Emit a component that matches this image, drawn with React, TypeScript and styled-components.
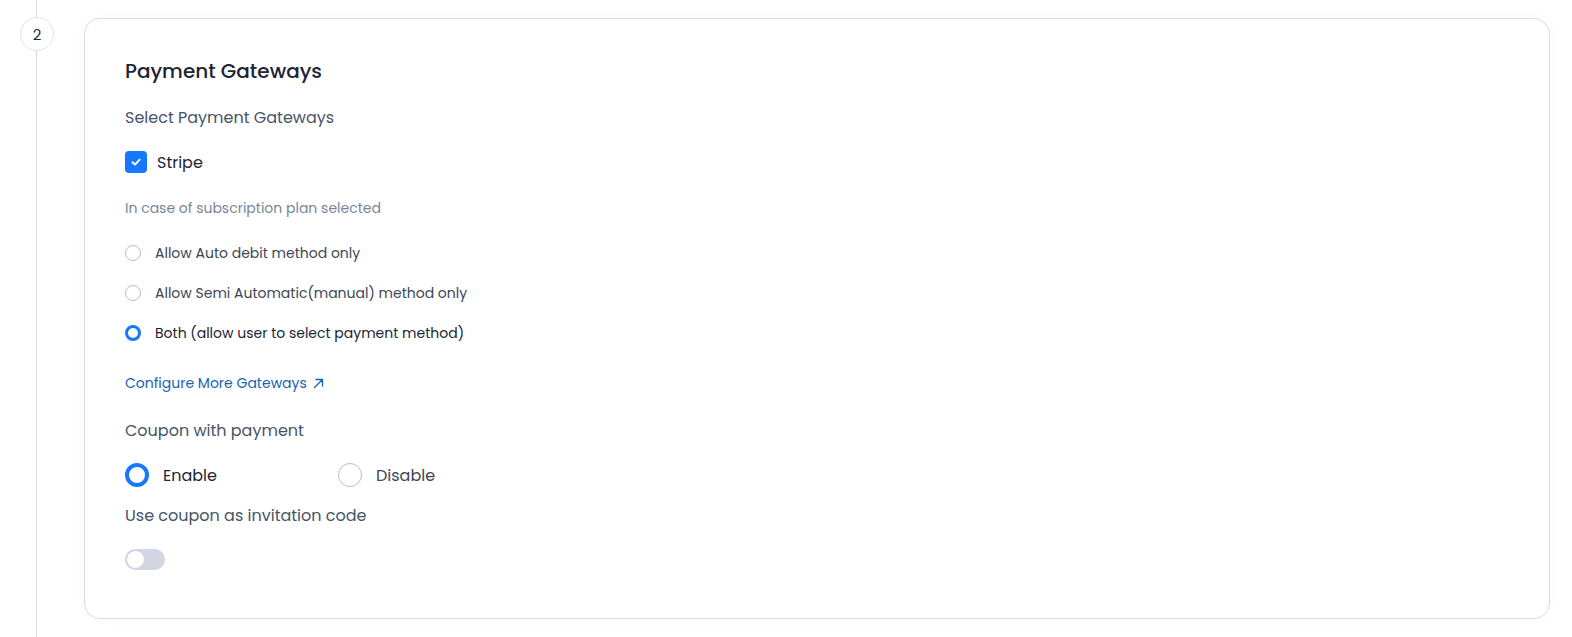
import React from "react";
import styled, { createGlobalStyle, css } from "styled-components";

const Global = createGlobalStyle`
  html, body { margin: 0; padding: 0; background: #ffffff; }
  body { font-family: "Poppins", "Open Sans", "Noto Sans", sans-serif; -webkit-font-smoothing: antialiased; }
  * { box-sizing: border-box; }
`;

const Page = styled.div`
  display: flex;
  align-items: flex-start;
  width: 1572px;
  height: 637px;
  padding-right: 22px;
  overflow: hidden;
`;

const Timeline = styled.div`
  position: relative;
  width: 84px;
  height: 637px;
  flex: none;
  &::before {
    content: "";
    position: absolute;
    left: 36px;
    top: 0;
    bottom: 0;
    width: 1px;
    background: #d9d9d9;
  }
`;

const StepBubble = styled.div`
  position: relative;
  margin: 17px 0 0 20px;
  width: 34px;
  height: 34px;
  border-radius: 50%;
  border: 1px solid #e3e3e3;
  background: #ffffff;
  display: flex;
  align-items: center;
  justify-content: center;
  font-size: 15px;
  color: #1d2939;
`;

const Card = styled.section`
  flex: 1;
  margin-top: 18px;
  height: 601px;
  border: 1px solid #dcdcdc;
  border-radius: 16px;
  background: #ffffff;
  box-shadow: 0 0 14px rgba(0, 0, 0, 0.025);
  padding: 39px 40px 0 40px;
  display: flex;
  flex-direction: column;
  align-items: flex-start;
`;

const Title = styled.h2`
  margin: 0;
  font-size: 20px;
  line-height: 27px;
  font-weight: 500;
  color: #1d2433;
`;

const Label = styled.div<{ $mt: number }>`
  margin-top: ${(p) => p.$mt}px;
  font-size: 16px;
  line-height: 22px;
  color: #475467;
`;

const Hint = styled.div<{ $mt: number }>`
  margin-top: ${(p) => p.$mt}px;
  font-size: 14px;
  line-height: 20px;
  color: #7b8598;
`;

const CheckRow = styled.label<{ $mt: number }>`
  margin-top: ${(p) => p.$mt}px;
  display: flex;
  align-items: center;
  gap: 10px;
  height: 22px;
  font-size: 16px;
  color: #1d2433;
`;

const CheckBox = styled.span`
  width: 22px;
  height: 22px;
  border-radius: 4px;
  background: #1677ff;
  display: flex;
  align-items: center;
  justify-content: center;
`;

const RadioRow = styled.label<{ $mt: number; $size: "sm" | "lg" }>`
  margin-top: ${(p) => p.$mt}px;
  display: flex;
  align-items: center;
  ${(p) =>
    p.$size === "sm"
      ? css`
          gap: 14px;
          height: 20px;
          font-size: 14px;
        `
      : css`
          gap: 14px;
          height: 24px;
          font-size: 16px;
        `}
`;

const RadioDot = styled.span<{ $checked: boolean; $size: "sm" | "lg" }>`
  flex: none;
  border-radius: 50%;
  background: #ffffff;
  ${(p) => {
    const s = p.$size === "sm" ? 16 : 24;
    const bw = p.$checked ? (p.$size === "sm" ? 3 : 4) : 1;
    return css`
      width: ${s}px;
      height: ${s}px;
      border: ${bw}px solid ${p.$checked ? "#1677ff" : "#b8bcc4"};
    `;
  }}
`;

const RadioText = styled.span<{ $checked: boolean }>`
  color: ${(p) => (p.$checked ? "#1d2433" : "#3d4656")};
`;

const OptionGroup = styled.div`
  margin-top: 21px;
  display: flex;
`;

const Option = styled.div`
  width: 213px;
`;

const LinkText = styled.a`
  margin-top: 30px;
  display: flex;
  align-items: center;
  gap: 6px;
  font-size: 14px;
  line-height: 20px;
  color: #1662b5;
  text-decoration: none;
`;

const Toggle = styled.span`
  margin-top: 22px;
  width: 40px;
  height: 21px;
  border-radius: 11px;
  background: #d3d6e2;
  display: flex;
  align-items: center;
  padding-left: 1px;
`;

const Knob = styled.span`
  width: 19px;
  height: 19px;
  border-radius: 50%;
  background: #ffffff;
  border: 1px solid #cfd3dd;
`;

const radios = [
  { label: "Allow Auto debit method only", checked: false },
  { label: "Allow Semi Automatic(manual) method only", checked: false },
  { label: "Both (allow user to select payment method)", checked: true },
];

export default function App() {
  return (
    <>
      <Global />
      <Page>
        <Timeline>
          <StepBubble>2</StepBubble>
        </Timeline>
        <Card>
          <Title>Payment Gateways</Title>
          <Label $mt={22}>Select Payment Gateways</Label>
          <CheckRow $mt={22}>
            <CheckBox>
              <svg width="12" height="12" viewBox="0 0 12 12" fill="none">
                <path d="M2.5 6.2 L5 8.6 L9.6 3.6" stroke="#fff" strokeWidth="1.9" strokeLinecap="round" strokeLinejoin="round" />
              </svg>
            </CheckBox>
            Stripe
          </CheckRow>
          <Hint $mt={25}>In case of subscription plan selected</Hint>
          {radios.map((r, i) => (
            <RadioRow key={r.label} $mt={i === 0 ? 25 : 20} $size="sm">
              <RadioDot $checked={r.checked} $size="sm" />
              <RadioText $checked={r.checked}>{r.label}</RadioText>
            </RadioRow>
          ))}
          <LinkText href="#">
            Configure More Gateways
            <svg width="11" height="11" viewBox="0 0 11 11" fill="none">
              <path d="M1.5 9.5 L9.5 1.5 M3 1.5 H9.5 V8" stroke="#1662b5" strokeWidth="1.3" strokeLinecap="round" strokeLinejoin="round" />
            </svg>
          </LinkText>
          <Label $mt={27}>Coupon with payment</Label>
          <OptionGroup>
            <Option>
              <RadioRow $mt={0} $size="lg">
                <RadioDot $checked={true} $size="lg" />
                <RadioText $checked={true}>Enable</RadioText>
              </RadioRow>
            </Option>
            <Option>
              <RadioRow $mt={0} $size="lg">
                <RadioDot $checked={false} $size="lg" />
                <RadioText $checked={false}>Disable</RadioText>
              </RadioRow>
            </Option>
          </OptionGroup>
          <Label $mt={18}>Use coupon as invitation code</Label>
          <Toggle>
            <Knob />
          </Toggle>
        </Card>
      </Page>
    </>
  );
}
